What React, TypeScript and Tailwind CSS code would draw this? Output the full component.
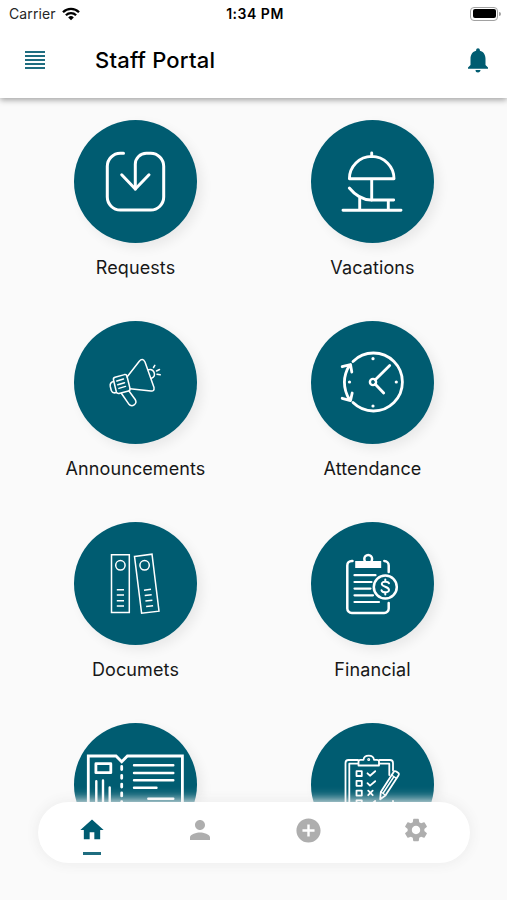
import type { ReactNode } from "react";
import { MdAddCircle, MdHome, MdNotifications, MdPerson, MdSettings } from "react-icons/md";

const RequestsIcon = () => (
  <g strokeWidth="3">
    <path d="M49.5 33.3H46.3a13 13 0 0 0-13 13V77a13 13 0 0 0 13 13H76.7a13 13 0 0 0 13-13V46.3a13 13 0 0 0-13-13H72.3a11 11 0 0 0-11 11V69" />
    <path d="M47.7 54.8 61.3 69 75 54.8" />
  </g>
);

const VacationsIcon = () => (
  <g strokeWidth="2.9">
    <path d="M60.7 33v3.5M38.4 58.7a22.3 22.3 0 0 1 44.6 0ZM60.7 58.7V80" />
    <path d="M38.3 68C44 75 51 79.8 60 80H82.7M48.7 77v13M77.3 80v10M32 90.3h58" />
  </g>
);

const AnnouncementsIcon = () => (
  <g strokeWidth="1.5">
    <path d="M53 56 65.3 40.3Q68.5 36.5 71 41L80 66.5Q80.5 70.5 77 70L56 67.7" />
    <path d="M41 56.3 50.5 53.6Q52.5 53.2 53 55.2L56 67.5Q56.3 69.5 54.5 70L45 72.5Q43 72.8 42.4 71L39.5 59Q39 57 41 56.3Z" />
    <path d="M39.5 60.5Q35.5 61.5 36.3 65.5L37.3 69.5Q38.5 72.8 42.5 71.5" />
    <path d="M42.8 60 49.5 58M43.8 63.7 50.5 61.7M44.9 67.4 51.5 65.4" />
    <path d="M47.5 72.5 54.5 82.7C58 87 63.8 83 61.2 78.5L55 70" />
    <path d="M74.5 48.7C80 47 83 55 77.5 57.3" />
    <path d="M79.5 46.5 80.8 44.3M82.5 50 85.5 48.5M83 53.2 86.2 53.8" />
  </g>
);

const AttendanceIcon = () => (
  <g strokeWidth="2.8">
    <path d="M42 40.4A29 29 0 1 1 42 81.6" />
    <path d="M38.3 44.5Q28.5 61 38.3 78.5M31.2 45.7 39.5 43.5 40.8 51M31.2 77.3 39.5 79.6 41.2 72" />
    <circle cx="62" cy="61" r="3.1" strokeWidth="2.4" />
    <path d="M64.3 58.7 78.7 44.5M64.3 63.2 72.7 72" />
    <g fill="white" stroke="none">
      <circle cx="62" cy="37.7" r="1.6" />
      <circle cx="85.3" cy="61" r="1.6" />
      <circle cx="62" cy="85" r="1.6" />
      <circle cx="38.5" cy="61" r="1.6" />
    </g>
  </g>
);

const DocumentsIcon = () => (
  <g strokeWidth="1.5" strokeLinecap="butt" strokeLinejoin="miter">
    <path d="M37.5 32.8H55.3V90.5H37.5ZM60.5 34.4 78 32.2 85 89.2 67.6 91.2Z" />
    <circle cx="46.4" cy="43.3" r="4.7" />
    <circle cx="70.6" cy="43.3" r="4.7" />
    <path d="M42.8 67.7H50M42.8 73H50M42.8 78.7H50M42.8 84H50" />
    <path d="M70 68.2 77 67.3M70.7 73.6 77.7 72.8M71.4 79.1 78.4 78.3M72.1 84.5 79.1 83.7" />
  </g>
);

const FinancialIcon = () => (
  <g strokeWidth="2.5">
    <path d="M41.5 38.9H40.8a4.5 4.5 0 0 0-4.5 4.5V86.5a4.5 4.5 0 0 0 4.5 4.5H73.2a4.5 4.5 0 0 0 4.5-4.5V81M73.3 38.9a4.5 4.5 0 0 1 4.4 4.5V50" />
    <path d="M44.2 39H70.2V46H44.2Z" fill="white" stroke="none" />
    <circle cx="57.2" cy="37" r="3.9" />
    <path d="M43.5 53.2H64.5M43.5 60H60.5M43.5 66.6H59.5M43.5 73.3H62M43.5 80H68" strokeWidth="2.2" />
    <circle cx="74.3" cy="65" r="11.5" />
    <path
      d="M78 61.3C77.2 59.3 70.6 58.8 70.8 62 71 65.2 78 64.3 78 68 78 71.2 71.2 70.9 70.5 68.2M74.3 57.5V59.6M74.3 70.4V72.5"
      strokeWidth="2"
    />
  </g>
);

const TicketIcon = () => (
  <g strokeWidth="2.8">
    <path d="M14.3 100V33H42L47.7 38.8 53.4 33H108.4V100Z" strokeLinejoin="miter" />
    <path d="M47.7 43.5V100" strokeDasharray="3 5.8" />
    <path d="M21.9 40.7H36.8V49.7H21.9Z" />
    <path d="M22.3 58.3V92M29 57.5V92M35.7 64.5V92" strokeWidth="2.4" />
    <path d="M60 42.3H99.3M60 50H99.3M60 57.3H99.3M60 64.7H82.5M74.3 75.7H99.3" strokeWidth="2.4" />
  </g>
);

const ChecklistIcon = () => (
  <g strokeWidth="1.8">
    <path d="M47 37H37.5a3 3 0 0 0-3 3V96H82V78M68.5 37H79a3 3 0 0 1 3 3V47.5" />
    <path d="M47 40.7H38.3V92H78.3V80M68.5 40.7H78.3V52" />
    <path d="M47.5 42.5V38.5Q47.5 36.8 49.5 36.8H52.5Q53 32.7 57.7 32.7T63 36.8H66Q68 36.8 68 38.5V42.5Z" />
    <circle cx="57.7" cy="36.6" r=".6" />
    <path d="M45.5 48.2H50.8V53H45.5ZM45.5 57.8H50.8V62.8H45.5ZM45.5 67.6H50.8V72.6H45.5ZM45.5 77.4H50.8V82.4H45.5Z" />
    <path d="M56.5 50.3 59 52.7 64.2 48.2M56.5 60.2 59 62.6 64.2 58.2M57.2 67.6 61.7 72.2M61.7 67.6 57.2 72.2M56.5 80 59 82.4 64.2 78" />
    <path
      d="M82.5 49.2Q83.5 47.3 85.3 48.5L87 49.7Q88.6 50.8 87.4 52.5L74.4 72.5 69.2 76.2 69.8 69Z"
      fill="#005c71"
    />
    <path d="M70 69 74.5 72.3M80.5 52 85.5 55.3M82.7 54 72.5 69.5" strokeWidth="1.4" />
  </g>
);

const WifiIcon = () => (
  <svg width="18" height="14" viewBox="0 0 18 14" fill="none" stroke="black" strokeWidth="2.3">
    <path d="M1 5.2a11.3 11.3 0 0 1 16 0M3.9 8.2a7.2 7.2 0 0 1 10.2 0" />
    <path d="M9 13.2 6.2 10.4a4 4 0 0 1 5.6 0Z" fill="black" stroke="none" />
  </svg>
);

type Tile = { label: string; icon: ReactNode };

const TILES: Tile[] = [
  { label: "Requests", icon: <RequestsIcon /> },
  { label: "Vacations", icon: <VacationsIcon /> },
  { label: "Announcements", icon: <AnnouncementsIcon /> },
  { label: "Attendance", icon: <AttendanceIcon /> },
  { label: "Documets", icon: <DocumentsIcon /> },
  { label: "Financial", icon: <FinancialIcon /> },
  { label: "", icon: <TicketIcon /> },
  { label: "", icon: <ChecklistIcon /> },
];

function StatusBar() {
  return (
    <div className="grid h-[27px] grid-cols-3 items-center pl-[9px] pr-[6px] text-[14px] text-black">
      <div className="flex items-center gap-[6px]">
        <span className="tracking-[0.1px] text-neutral-800">Carrier</span>
        <WifiIcon />
      </div>
      <span className="text-center text-[14px] font-semibold tracking-[0.5px]">1:34 PM</span>
      <div className="flex items-center justify-end gap-px">
        <div className="h-[14px] w-[28px] rounded-[4px] border border-neutral-400 p-[1.5px]">
          <div className="h-full rounded-[2px] bg-black" />
        </div>
        <div className="h-1 w-[2px] rounded-r-full bg-neutral-400" />
      </div>
    </div>
  );
}

export default function App() {
  return (
    <div className="relative flex h-[900px] w-full flex-col overflow-hidden bg-[#fafafa] font-['Inter',sans-serif]">
      <header className="z-10 h-[98px] shrink-0 bg-white shadow-[0_2px_6px_rgba(0,0,0,0.36)]">
        <StatusBar />
        <div className="flex h-[66px] items-center pl-[25px] pr-[14.5px]">
          <button type="button" aria-label="Menu" className="flex w-5 flex-col gap-[2px]">
            {[0, 1, 2, 3, 4].map((i) => (
              <span key={i} className="h-[2px] w-full bg-[#1f6d80]" />
            ))}
          </button>
          <h1 className="ml-[50px] flex-1 text-[22px] font-medium tracking-[0.2px] text-black">Staff Portal</h1>
          <button type="button" aria-label="Notifications" className="text-[#005c71]">
            <MdNotifications size={30} />
          </button>
        </div>
      </header>

      <main className="grid h-[750px] shrink-0 grid-cols-2 content-start overflow-hidden pl-[17px] pr-4 pt-[22px]">
        {TILES.map((tile, i) => (
          <div key={i} className="flex h-[201px] flex-col items-center">
            <div className="size-[123px] shrink-0 rounded-full bg-[#005c71] shadow-[5px_5px_12px_rgba(0,0,0,0.07)]">
              <svg
                viewBox="0 0 123 123"
                className="size-full"
                fill="none"
                stroke="white"
                strokeLinecap="round"
                strokeLinejoin="round"
              >
                {tile.icon}
              </svg>
            </div>
            <span className="mt-[11px] text-[18px] leading-7 tracking-[0.1px] text-neutral-900">{tile.label}</span>
          </div>
        ))}
      </main>

      <nav className="absolute left-[38px] top-[802px] z-10 flex h-[61px] w-[432px] rounded-full bg-white shadow-[0_0_12px_2px_#eeeeee]">
        <button type="button" aria-label="Home" className="flex flex-1 flex-col items-center pt-[14px] text-[#005c71]">
          <MdHome size={28} />
          <span className="mt-[8px] h-[3px] w-[18px] bg-[#1f6d80]" />
        </button>
        <button type="button" aria-label="Profile" className="flex flex-1 justify-center pt-[13px] text-[#aeaeae]">
          <MdPerson size={30} />
        </button>
        <button type="button" aria-label="Add" className="flex flex-1 justify-center pt-[14px] text-[#aeaeae]">
          <MdAddCircle size={29} />
        </button>
        <button type="button" aria-label="Settings" className="flex flex-1 justify-center pt-[14px] text-[#aeaeae]">
          <MdSettings size={28} />
        </button>
      </nav>
    </div>
  );
}
